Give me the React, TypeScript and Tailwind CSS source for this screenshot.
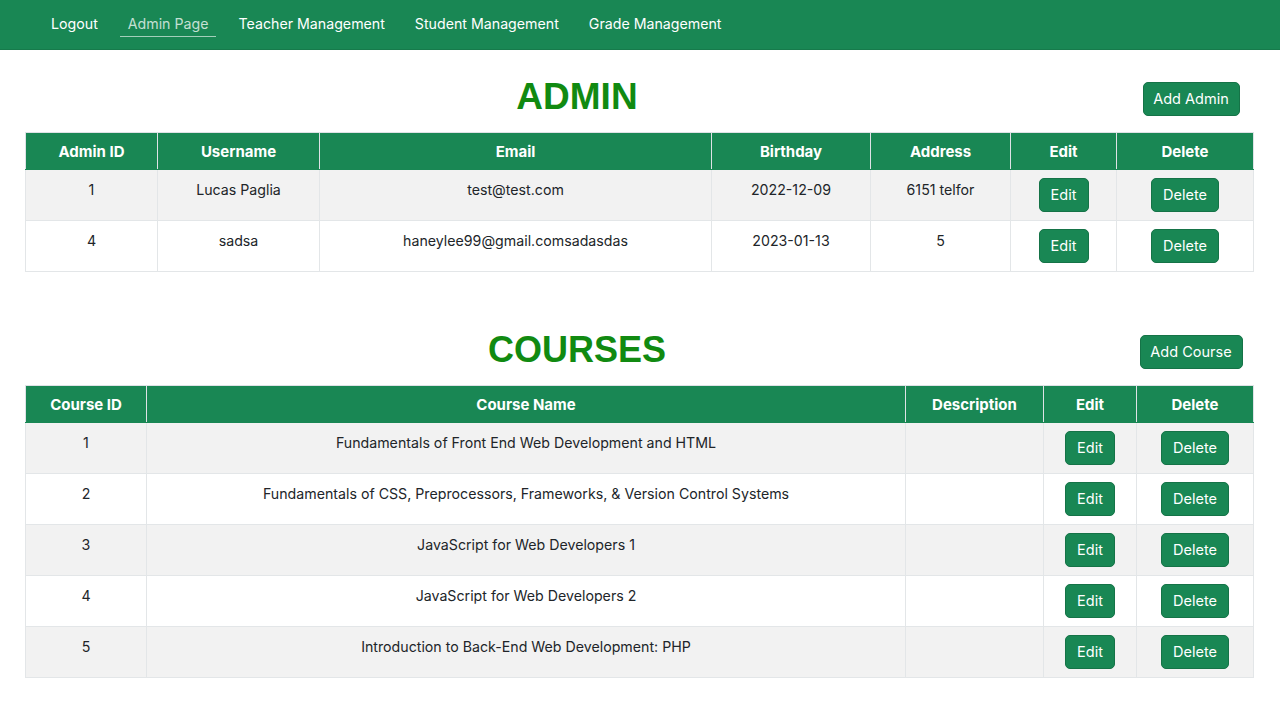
import React from "react";

const GREEN = "bg-[#198754]";

function Btn({ label, w }: { label: string; w: string }) {
  return (
    <button
      className={`${GREEN} ${w} h-[34px] rounded-[5px] border border-[#157347] text-white text-[14.5px] leading-[20px] inline-flex items-center justify-center`}
    >
      {label}
    </button>
  );
}

const th = "border border-[#dee2e6] border-b-[#198754] px-2 h-[37px] font-bold text-white text-[15px] leading-[21px] text-center align-middle";
const td = "border border-[#e3e6e8] px-2 pt-[10px] pb-[8px] h-[51px] text-[14.2px] leading-[20px] text-center align-top text-[#212529]";
const tdBtn = "border border-[#e3e6e8] px-2 h-[51px] text-center align-middle";

const admins = [
  { id: "1", user: "Lucas Paglia", email: "test@test.com", bday: "2022-12-09", addr: "6151 telfor" },
  { id: "4", user: "sadsa", email: "haneylee99@gmail.comsadasdas", bday: "2023-01-13", addr: "5" },
];

const courses = [
  "Fundamentals of Front End Web Development and HTML",
  "Fundamentals of CSS, Preprocessors, Frameworks, & Version Control Systems",
  "JavaScript for Web Developers 1",
  "JavaScript for Web Developers 2",
  "Introduction to Back-End Web Development: PHP",
];

function Header({ title, button, bw, tsize }: { title: string; button: string; bw: string; tsize: string }) {
  return (
    <div className="flex items-start h-[51px]">
      <div className="w-[1104px] text-center">
        <h1 className={`${tsize} leading-[30px] pt-[1px] font-bold text-[#118a11]`} style={{ fontFamily: '"Liberation Sans", Arial, sans-serif' }}>
          {title}
        </h1>
      </div>
      <div className="w-[124px] pt-[1px] flex justify-center">
        <Btn label={button} w={bw} />
      </div>
    </div>
  );
}

export default function App() {
  return (
    <div className="min-h-[705px] bg-white" style={{ fontFamily: 'Inter, "Noto Sans", sans-serif' }}>
      <nav className={`${GREEN} h-[50px] border-b border-[#167a4b] flex items-center pl-[51px] pb-[2px] gap-[30px] text-[14.2px] text-white`}>
        <span>Logout</span>
        <span className="relative text-white/75">
          Admin Page
          <span className="absolute left-[-8px] right-[-7px] top-[23px] h-[1px] bg-white/60" />
        </span>
        <span>Teacher Management</span>
        <span>Student Management</span>
        <span>Grade Management</span>
      </nav>

      <div className="px-[25px] pt-[31px]">
        <Header title="ADMIN" button="Add Admin" bw="w-[97px]" tsize="text-[37px]" />
        <table className="w-[1228px] border-collapse table-fixed">
          <colgroup>
            <col className="w-[132px]" />
            <col className="w-[162px]" />
            <col className="w-[392px]" />
            <col className="w-[159px]" />
            <col className="w-[140px]" />
            <col className="w-[106px]" />
            <col className="w-[137px]" />
          </colgroup>
          <thead>
            <tr className={GREEN}>
              {["Admin ID", "Username", "Email", "Birthday", "Address", "Edit", "Delete"].map((h) => (
                <th key={h} className={th}>{h}</th>
              ))}
            </tr>
          </thead>
          <tbody>
            {admins.map((a, i) => (
              <tr key={a.id} className={i % 2 === 0 ? "bg-[#f2f2f2]" : "bg-white"}>
                <td className={td}>{a.id}</td>
                <td className={td}>{a.user}</td>
                <td className={td}>{a.email}</td>
                <td className={td}>{a.bday}</td>
                <td className={td}>{a.addr}</td>
                <td className={tdBtn}><Btn label="Edit" w="w-[50px]" /></td>
                <td className={tdBtn}><Btn label="Delete" w="w-[68px]" /></td>
              </tr>
            ))}
          </tbody>
        </table>

        <div className="mt-[62px]">
          <Header title="COURSES" button="Add Course" bw="w-[103px]" tsize="text-[36px]" />
          <table className="w-[1228px] border-collapse table-fixed">
            <colgroup>
              <col className="w-[121px]" />
              <col className="w-[759px]" />
              <col className="w-[138px]" />
              <col className="w-[93px]" />
              <col className="w-[117px]" />
            </colgroup>
            <thead>
              <tr className={GREEN}>
                {["Course ID", "Course Name", "Description", "Edit", "Delete"].map((h) => (
                  <th key={h} className={th}>{h}</th>
                ))}
              </tr>
            </thead>
            <tbody>
              {courses.map((c, i) => (
                <tr key={c} className={i % 2 === 0 ? "bg-[#f2f2f2]" : "bg-white"}>
                  <td className={td}>{i + 1}</td>
                  <td className={td}>{c}</td>
                  <td className={td}></td>
                  <td className={tdBtn}><Btn label="Edit" w="w-[50px]" /></td>
                  <td className={tdBtn}><Btn label="Delete" w="w-[68px]" /></td>
                </tr>
              ))}
            </tbody>
          </table>
        </div>
      </div>
    </div>
  );
}
